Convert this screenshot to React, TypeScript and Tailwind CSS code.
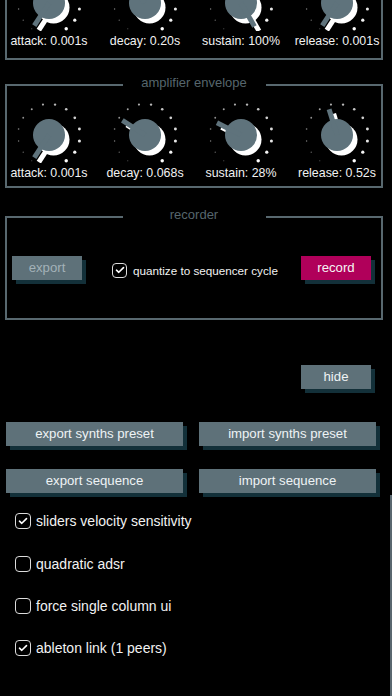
import React from "react";

const BORDER = "border-[#58686f]";

function Knob({ angle, label }: { angle: number; label: string }) {
  const cx = 48;
  const cy = 34;
  const R = 31;
  const dots = Array.from({ length: 14 }, (_, i) => {
    const a = ((-146.25 + i * 22.5) * Math.PI) / 180;
    return {
      x: cx + R * Math.sin(a),
      y: cy - R * Math.cos(a),
      r: 0.55 + i * 0.09,
      o: 0.4 + i * 0.046,
    };
  });
  const pointer = (
    <>
      <circle cx={cx} cy={cy} r={16} />
      <rect x={cx - 2.5} y={cy - 27} width={5} height={27} transform={`rotate(${angle} ${cx} ${cy})`} />
    </>
  );
  return (
    <div className="flex flex-col items-center">
      <svg width={96} height={62} viewBox="0 0 96 62" className="block">
        {dots.map((d, i) => (
          <circle key={i} cx={d.x} cy={d.y} r={d.r} fill="#ffffff" fillOpacity={d.o} />
        ))}
        <g transform="translate(4.5 4.5)" fill="#ffffff">
          {pointer}
        </g>
        <g fill="#5f737c">{pointer}</g>
      </svg>
      <div className="mt-[2px] text-[12.4px] leading-[16px] text-[#f2f2f2] whitespace-nowrap">{label}</div>
    </div>
  );
}

function Section({
  title,
  bodyClass,
  className,
  children,
}: {
  title: string;
  bodyClass: string;
  className: string;
  children: React.ReactNode;
}) {
  return (
    <div className={`ml-[5px] w-[378px] ${className}`}>
      <div className="flex items-start h-[16px]">
        <div className={`flex-1 mt-[9px] h-[7px] border-l-2 border-t-2 ${BORDER}`} />
        <div className="w-[143px] text-center text-[13px] leading-[16px] text-[#56666d] whitespace-nowrap">{title}</div>
        <div className={`flex-1 mt-[9px] h-[7px] border-r-2 border-t-2 ${BORDER}`} />
      </div>
      <div className={`border-x-2 border-b-2 ${BORDER} ${bodyClass}`}>{children}</div>
    </div>
  );
}

function Btn({ className, textClass, children }: { className: string; textClass: string; children: React.ReactNode }) {
  return (
    <div
      className={`h-[24px] flex items-center justify-center shadow-[4px_4px_0_#133039] text-[13.2px] leading-[16px] whitespace-nowrap ${className} ${textClass}`}
    >
      {children}
    </div>
  );
}

function Check({ checked, size }: { checked: boolean; size: string }) {
  return (
    <div className={`${size} rounded-[4px] border-[1.5px] border-[#dcdcdc] flex items-center justify-center shrink-0`}>
      {checked && (
        <svg width="10" height="8" viewBox="0 0 10 8" className="block">
          <path d="M1.5 4.2 L3.8 6.3 L8.5 1.6" fill="none" stroke="#ffffff" strokeWidth="1.6" strokeLinecap="round" strokeLinejoin="round" />
        </svg>
      )}
    </div>
  );
}

function KnobRow({ knobs }: { knobs: [number, string][] }) {
  return (
    <div className="-ml-[6px] w-[384px] grid grid-cols-4">
      {knobs.map(([a, l], i) => (
        <Knob key={i} angle={a} label={l} />
      ))}
    </div>
  );
}

export default function App() {
  return (
    <div className="relative w-[392px] min-h-[696px] bg-black overflow-hidden font-['Liberation_Sans',Arial,sans-serif] text-white">
      <Section title="" className="mt-[-57.3px]" bodyClass="pt-[10px] pb-[9.3px]">
        <KnobRow
          knobs={[
            [-147, "attack: 0.001s"],
            [-40, "decay: 0.20s"],
            [150, "sustain: 100%"],
            [-147, "release: 0.001s"],
          ]}
        />
      </Section>

      <Section title="amplifier envelope" className="mt-[14.8px]" bodyClass="pt-[10px] pb-[5.2px]">
        <KnobRow
          knobs={[
            [-147, "attack: 0.001s"],
            [-57, "decay: 0.068s"],
            [-63, "sustain: 28%"],
            [-17, "release: 0.52s"],
          ]}
        />
      </Section>

      <Section title="recorder" className="mt-[19.5px]" bodyClass="pt-[33px] pb-[37.5px]">
        <div className="flex items-start h-[24px]">
          <Btn className="ml-[5px] w-[70px] bg-[#5e7179]" textClass="text-[#a3b2b8]">
            export
          </Btn>
          <div className="ml-[30px] mt-[6.5px] flex items-center">
            <Check checked size="w-[15px] h-[15px]" />
            <span className="ml-[6px] text-[11.7px] leading-[15px] text-[#f2f2f2] whitespace-nowrap">
              quantize to sequencer cycle
            </span>
          </div>
          <Btn className="ml-auto mr-[10px] w-[70px] bg-[#b0005a]" textClass="text-[#f5f5f5]">
            record
          </Btn>
        </div>
      </Section>

      <div className="mt-[45px] ml-[301px] w-[70px]">
        <Btn className="w-[70px] bg-[#5e7179]" textClass="text-[#eef3f5]">
          hide
        </Btn>
      </div>

      <div className="mt-[33px] ml-[6px] flex gap-[16px]">
        <Btn className="w-[177px] bg-[#5e7179]" textClass="text-[#eef3f5]">
          export synths preset
        </Btn>
        <Btn className="w-[177px] bg-[#5e7179]" textClass="text-[#eef3f5]">
          import synths preset
        </Btn>
      </div>

      <div className="mt-[23px] ml-[6px] flex gap-[16px]">
        <Btn className="w-[177px] bg-[#5e7179]" textClass="text-[#eef3f5]">
          export sequence
        </Btn>
        <Btn className="w-[177px] bg-[#5e7179]" textClass="text-[#eef3f5]">
          import sequence
        </Btn>
      </div>

      <div className="mt-[20.3px] ml-[15px] flex flex-col gap-[26.3px]">
        {(
          [
            [true, "sliders velocity sensitivity"],
            [false, "quadratic adsr"],
            [false, "force single column ui"],
            [true, "ableton link (1 peers)"],
          ] as [boolean, string][]
        ).map(([c, t], i) => (
          <div key={i} className="flex items-center h-[16px]">
            <Check checked={c} size="w-[16px] h-[16px]" />
            <span className="ml-[5px] text-[14px] leading-[16px] text-[#f2f2f2] whitespace-nowrap">{t}</span>
          </div>
        ))}
      </div>

      <div className="absolute left-[389.5px] top-[495px] w-[2.5px] h-[201px] bg-[#5a6870]" />
    </div>
  );
}
